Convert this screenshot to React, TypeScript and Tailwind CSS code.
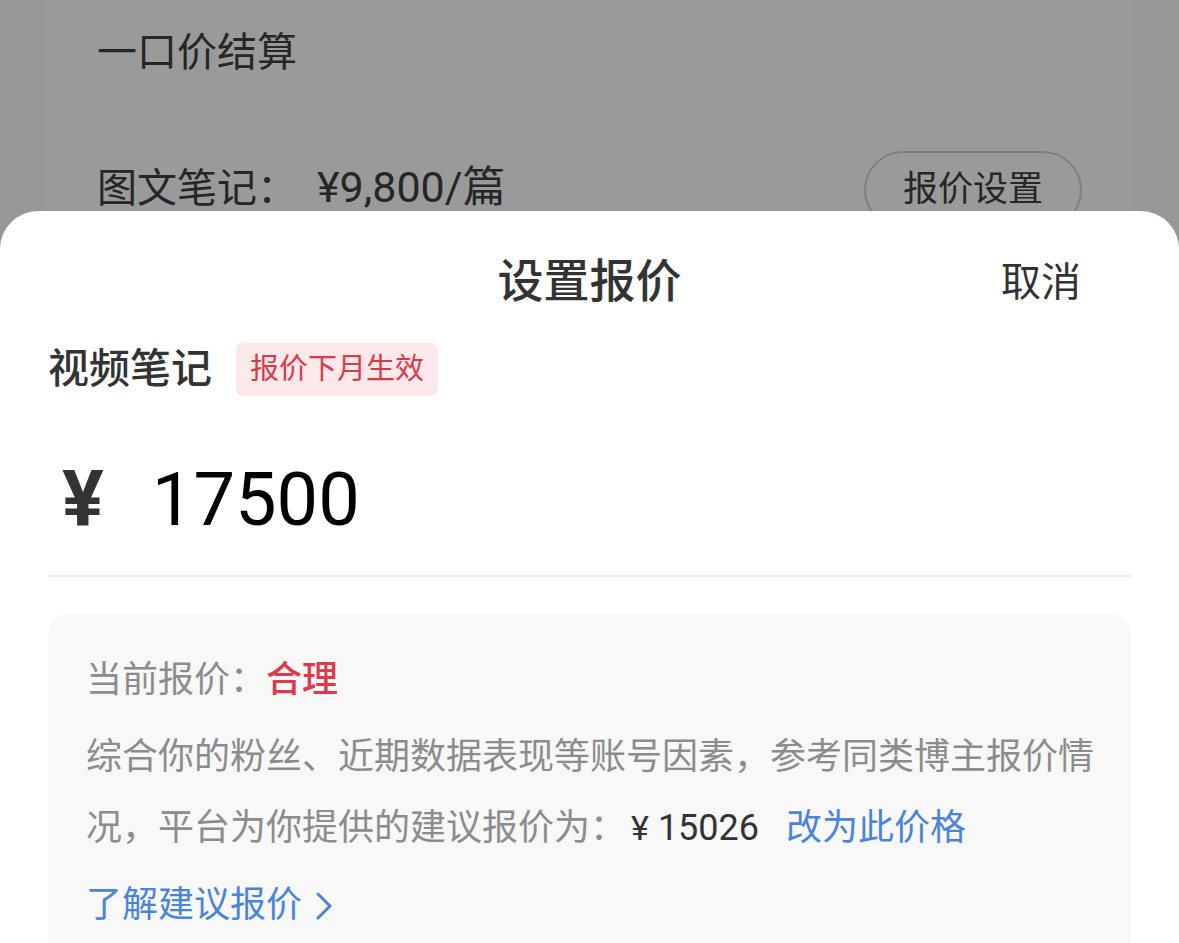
const font = { fontFamily: 'Roboto, "Noto Sans CJK SC", sans-serif' };

export default function App() {
  return (
    <div className="relative h-[943px] w-full overflow-hidden bg-[#979797]" style={font}>
      {/* Page behind the sheet, dimmed by overlay */}
      <div className="mx-[46px] h-full bg-[#9a9a9a] px-[51px] text-[#262626]">
        <div className="pt-[29px] text-[40px] leading-[48px]">一口价结算</div>
        <div className="mt-[70px] flex items-center justify-between">
          <div className="flex items-baseline text-[40px] leading-[48px]">
            图文笔记：<span className="ml-[20px] text-[43px]">¥9,800/篇</span>
          </div>
          <button className="mt-[4px] flex h-[78px] w-[218px] items-center justify-center rounded-full border-2 border-[#7f7f7f] text-[35px] text-[#262626]">
            报价设置
          </button>
        </div>
      </div>

      {/* Bottom sheet */}
      <div className="absolute inset-x-0 top-[211px] bottom-0 rounded-t-[38px] bg-white px-[48px]">
        <div className="relative pt-[45px] text-center">
          <div className="text-[46px] font-medium leading-[50px] text-[#333333]">设置报价</div>
          <button className="absolute right-[50px] top-[47px] text-[40px] leading-[50px] text-[#333333]">取消</button>
        </div>

        <div className="mt-[37px] flex h-[53px] items-center">
          <span className="text-[41px] font-medium leading-[53px] text-[#333333]">视频笔记</span>
          <span className="ml-[24px] flex h-[53px] items-center rounded-[7px] bg-[#fde8ea] px-[14px] text-[29px] text-[#d83a4a]">
            报价下月生效
          </span>
        </div>

        <div className="mt-[64px] flex h-[80px] items-center">
          <span className="ml-[14px] text-[78px] font-bold leading-[80px] text-[#333333]">¥</span>
          <span className="ml-[48px] text-[74px] leading-[80px] text-black">17500</span>
        </div>

        <div className="mt-[35px] h-[2px] bg-[#ececec]" />

        <div className="mt-[37px] h-[400px] rounded-[20px] bg-[#f8f8f8] pl-[38px] pr-[35px] pt-[31px] text-[36px] leading-[71px] text-[#8c8c8c]">
          <div className="whitespace-nowrap">
            当前报价：<span className="font-medium text-[#e0394a]">合理</span>
          </div>
          <div className="mt-[6px]">
            <div className="whitespace-nowrap">综合你的粉丝、近期数据表现等账号因素，参考同类博主报价情</div>
            <div className="flex items-baseline whitespace-nowrap">
              <span>况，平台为你提供的建议报价为：</span>
              <span className="ml-[5px] text-[34px] text-[#333333]">¥</span>
              <span className="ml-[9px] text-[#333333]">15026</span>
              <span className="ml-[27px] text-[#4a84d8]">改为此价格</span>
            </div>
          </div>
          <div className="mt-[6px] flex items-center text-[#4a84d8]">
            <span>了解建议报价</span>
            <svg className="ml-[14px]" width="16" height="28" viewBox="0 0 16 28" fill="none">
              <path d="M2 2 L14 14 L2 26" stroke="currentColor" strokeWidth="3" strokeLinecap="round" strokeLinejoin="round" />
            </svg>
          </div>
        </div>
      </div>
    </div>
  );
}
